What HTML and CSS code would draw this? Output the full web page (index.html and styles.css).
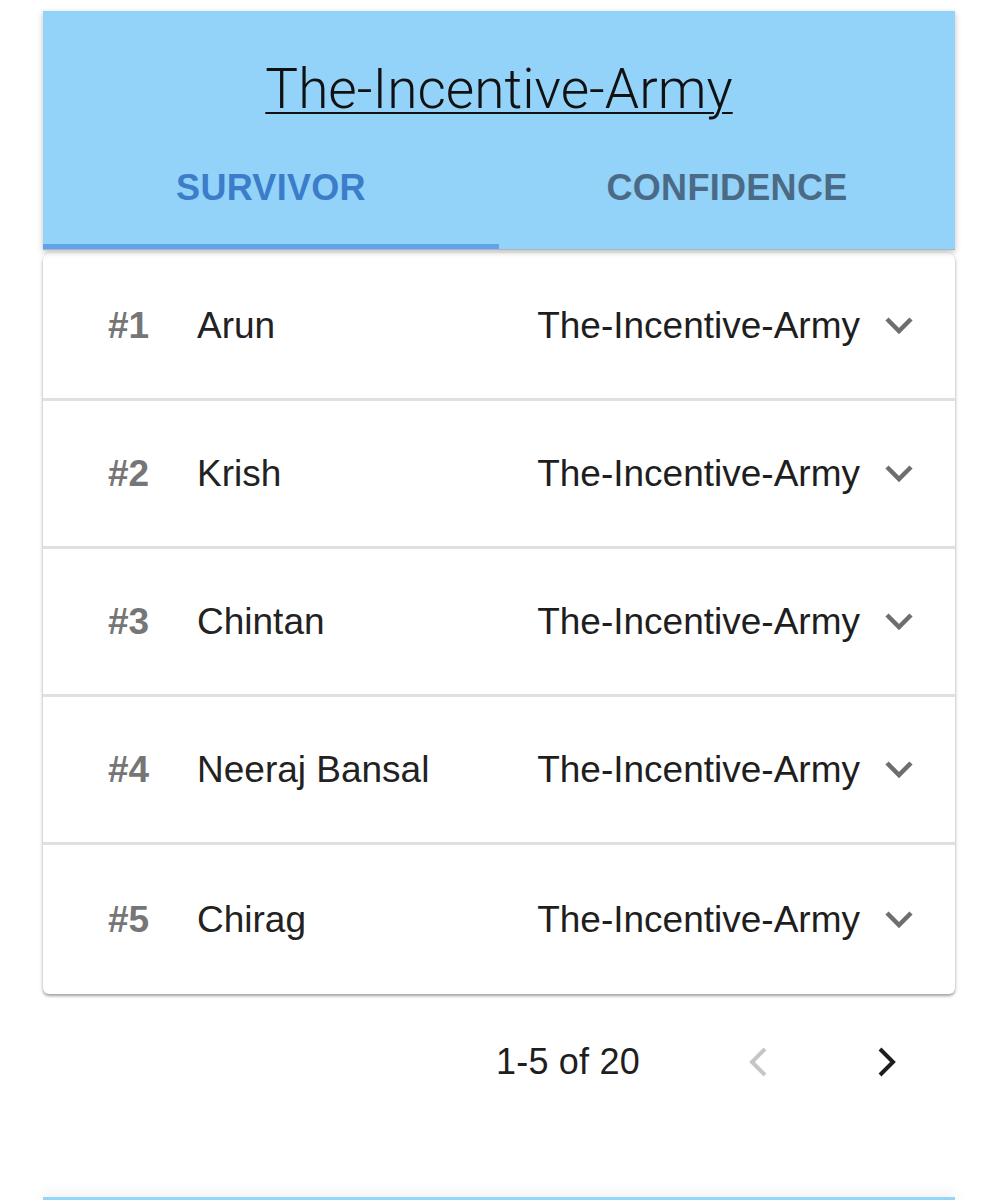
FILE: index.html
```html
<!DOCTYPE html>
<html>
<head>
<meta charset="utf-8">
<link rel="stylesheet" href="styles.css">
</head>
<body>
<div class="page">
  <header class="header">
    <div class="title-wrap"><a class="title" href="#">The-Incentive-Army</a></div>
    <nav class="tabs">
      <div class="tab active">SURVIVOR</div>
      <div class="tab">CONFIDENCE</div>
      <div class="indicator"></div>
    </nav>
  </header>
  <section class="list">
    <div class="row"><span class="rank">#1</span><span class="name">Arun</span><span class="team">The-Incentive-Army</span><svg class="chev" viewBox="0 0 28 18"><polyline points="2,2 14,14 26,2"/></svg></div>
    <div class="row"><span class="rank">#2</span><span class="name">Krish</span><span class="team">The-Incentive-Army</span><svg class="chev" viewBox="0 0 28 18"><polyline points="2,2 14,14 26,2"/></svg></div>
    <div class="row"><span class="rank">#3</span><span class="name">Chintan</span><span class="team">The-Incentive-Army</span><svg class="chev" viewBox="0 0 28 18"><polyline points="2,2 14,14 26,2"/></svg></div>
    <div class="row"><span class="rank">#4</span><span class="name">Neeraj Bansal</span><span class="team">The-Incentive-Army</span><svg class="chev" viewBox="0 0 28 18"><polyline points="2,2 14,14 26,2"/></svg></div>
    <div class="row"><span class="rank">#5</span><span class="name">Chirag</span><span class="team">The-Incentive-Army</span><svg class="chev" viewBox="0 0 28 18"><polyline points="2,2 14,14 26,2"/></svg></div>
  </section>
  <div class="pager">
    <span class="range">1-5 of 20</span>
    <svg class="pg prev" viewBox="0 0 20 30"><polyline points="17,2 4,15 17,28"/></svg>
    <svg class="pg next" viewBox="0 0 20 30"><polyline points="3,2 16,15 3,28"/></svg>
  </div>
  <div class="next-card"></div>
</div>
</body>
</html>
```
FILE: styles.css
```css
html, body {
  margin: 0;
  padding: 0;
  background: #ffffff;
}
body {
  font-family: "Liberation Sans", Arial, sans-serif;
  color: #222222;
  overflow: hidden;
  height: 1200px;
}
.page {
  width: 912px;
  margin: 0 auto;
  padding-top: 11px;
}
.header {
  background: #93d3fa;
  box-shadow: 0 2px 6px rgba(0,0,0,0.25);
  position: relative;
  z-index: 2;
  border-bottom: 1px solid #a9b6bf;
}
.title-wrap {
  text-align: center;
  padding-top: 47px;
  height: 82px;
}
.title {
  font-family: "Roboto", "Liberation Sans", sans-serif;
  font-weight: 300;
  font-size: 55px;
  line-height: 62px;
  color: #111111;
  text-decoration: underline;
  text-decoration-thickness: 2px;
  text-underline-offset: 4px;
}
.tabs {
  display: grid;
  grid-template-columns: 1fr 1fr;
  height: 109px;
  position: relative;
}
.tab {
  display: flex;
  align-items: center;
  justify-content: center;
  font-weight: bold;
  font-size: 36px;
  letter-spacing: 0.3px;
  color: #4b6a86;
  padding-bottom: 13px;
}
.tab.active {
  color: #3b7dc9;
}
.indicator {
  position: absolute;
  left: 0;
  bottom: 0;
  width: 50%;
  height: 5px;
  background: #5ea3ec;
}
.list {
  margin-top: 3px;
  background: #ffffff;
  border-radius: 8px 8px 6px 6px;
  box-shadow: 0 2px 3px rgba(0,0,0,0.35), 0 0 6px rgba(0,0,0,0.08);
}
.row {
  display: flex;
  align-items: center;
  height: 145px;
  border-bottom: 3px solid #e0e0e0;
  padding-left: 65px;
  padding-right: 42px;
  font-size: 37px;
}
.row:last-child {
  border-bottom: none;
  height: 149px;
}
.rank {
  width: 89px;
  font-weight: bold;
  color: #767676;
}
.name {
  flex: 1;
  color: #222222;
}
.team {
  color: #1e1e1e;
}
.chev {
  width: 28px;
  height: 18px;
  margin-left: 25px;
  fill: none;
  stroke: #6e6e6e;
  stroke-width: 4.5;
}
.pager {
  display: flex;
  align-items: center;
  height: 136px;
}
.range {
  margin-left: 453px;
  font-size: 36px;
  letter-spacing: 0.2px;
  color: #1e1e1e;
}
.pg {
  width: 20px;
  height: 30px;
  fill: none;
  stroke-width: 4;
}
.prev {
  stroke: #c6c6c6;
  margin-left: 108px;
}
.next {
  stroke: #1e1e1e;
  margin-left: 109px;
}
.next-card {
  margin-top: 67px;
  height: 40px;
  background: #94d6f6;
  box-shadow: 0 -4px 14px rgba(0,0,0,0.06);
}
```
